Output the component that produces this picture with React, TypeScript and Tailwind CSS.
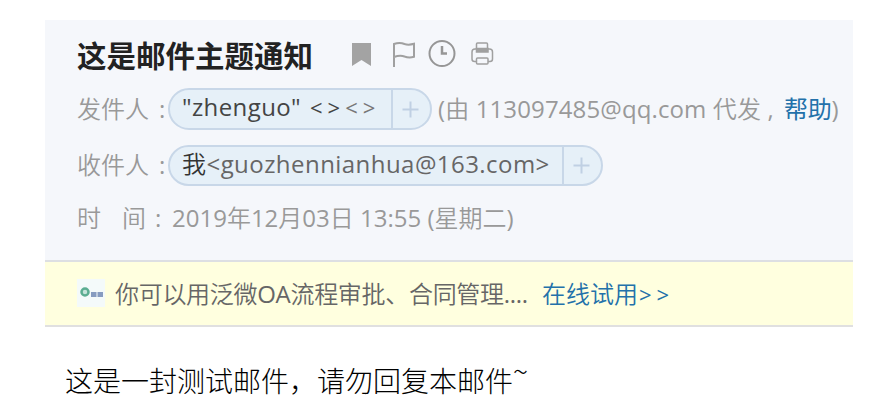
import React from "react";

function Bookmark() {
  return (
    <svg className="mb-[1px] ml-[40px] h-[32px] w-[20px]" viewBox="0 0 20 32" fill="#a3a3a3">
      <path d="M0 5h19v23l-9.500-6L0 28z" />
    </svg>
  );
}

function Flag() {
  return (
    <svg className="mb-[1px] ml-[20px] h-[32px] w-[25px]" viewBox="0 0 25 32" fill="none" stroke="#a0a0a0" strokeWidth="2">
      <path d="M2 29V6c4-1.500 7-1.500 10.500 0 3.500 1.200 6 .8 9.500-.2v13c-3.500 1-6 1-9.500-.3C9 17 6 17.500 2 19" />
    </svg>
  );
}

function Clock() {
  return (
    <svg className="mb-[1px] ml-[11px] h-[32px] w-[28px]" viewBox="0 0 28 32" fill="none" stroke="#969696" strokeWidth="2">
      <circle cx="14" cy="15.500" r="12.500" />
      <path d="M14 8v7.500h5" strokeWidth="2.500" />
    </svg>
  );
}

function Printer() {
  return (
    <svg className="mb-[1px] ml-[15px] h-[32px] w-[24px]" viewBox="0 0 24 32" fill="none" stroke="#a0a0a0" strokeWidth="1.500">
      <path d="M5.500 11V6q0-1 1-1h9q1 0 1 1v5M5.500 23.500H3.500Q1 23.500 1 21v-7Q1 11 4 11h14.500q3 0 3 3v7q0 2.500-2.500 2.500H17" />
      <path d="M5.500 10.500h11.500v3.500H5.500z" fill="#a0a0a0" />
      <rect x="5.500" y="20" width="11.500" height="6" rx="1" />
    </svg>
  );
}

function Plus({ className }: { className: string }) {
  return (
    <span className={"flex items-center justify-center border-l-2 border-[#c8d7e8] pr-[3px] " + className}>
      <svg className="h-[17px] w-[17px]" viewBox="0 0 17 17" stroke="#c0d0e3" strokeWidth="2">
        <path d="M8.500 0.500v16M0.500 8.500h16" />
      </svg>
    </span>
  );
}

export default function App() {
  return (
    <main className="h-[404px] w-[886px] overflow-hidden bg-white pt-[20px] pl-[45px] font-['Open_Sans','Noto_Sans_CJK_SC',sans-serif] text-[24px] whitespace-pre">
      <header className="h-[242px] w-[808px] border-b-2 border-[#dddfe3] bg-[#f5f7fb] pl-[32px] text-[#999]">
        <div className="flex h-[68px] items-center">
          <h1 className="w-[235px] font-['Noto_Sans_CJK_SC',sans-serif] text-[29.500px] leading-[36px] font-bold text-[#222]">这是邮件主题通知</h1>
          <Bookmark />
          <Flag />
          <Clock />
          <Printer />
        </div>
        <div className="flex h-[42px] items-center leading-[36px]">
          <span className="w-[82px] font-[350]">发件人</span>
          <span className="w-[9px]">:</span>
          <div className="flex h-[42px] w-[264px] shrink-0 rounded-full border-2 border-[#c8d7e8] bg-[#e6f0f8] pl-[12px] text-[#444]">
            <span className="w-[128px] leading-[34px] tracking-[0.400px]">"zhenguo"</span>
            <span className="w-[81px] text-[22px] leading-[34px] tracking-[5px]">&lt;&gt;<span className="text-[#777]">&lt;&gt;</span></span>
            <Plus className="w-[39px]" />
          </div>
          <span className="ml-[6px] w-[346px] shrink-0 tracking-[0.120px]">(<span className="font-[350]">由</span> 113097485@qq.com <span className="font-[350]">代发</span> ,</span>
          <span className="tracking-[-0.300px] text-[#2371aa]">帮助</span>
          <span>)</span>
        </div>
        <div className="mt-[14px] flex h-[42px] items-center leading-[36px]">
          <span className="w-[82px] font-[350]">收件人</span>
          <span className="w-[9px]">:</span>
          <div className="flex h-[41px] w-[435px] shrink-0 rounded-full border-2 border-[#c8d7e8] bg-[#e6f0f8] pl-[12px] text-[#666]">
            <span className="w-[380px] leading-[34px] tracking-[0.450px]"><span className="font-[350] text-[#333]">我</span>&lt;guozhennianhua@163.com&gt;</span>
            <Plus className="w-[39px]" />
          </div>
        </div>
        <div className="mt-[12px] flex h-[40px] items-center leading-[36px]">
          <span className="w-[45px] font-[350]">时</span>
          <span className="w-[33px] font-[350]">间</span>
          <span className="w-[17px]">:</span>
          <span>2019<span className="font-[350]">年</span>12<span className="font-[350]">月</span>03<span className="font-[350]">日</span> 13:55 (<span className="font-[350]">星期二</span>)</span>
        </div>
      </header>
      <div className="flex h-[65px] w-[808px] items-center border-b-2 border-[#e0e0e0] bg-[#ffffdf] pl-[32px] leading-[36px] text-[#666]">
        <svg className="mb-[1px] h-[28px] w-[28px]" viewBox="0 0 28 28">
          <path fill="#f4fafa" d="M0 0h28v28H0z" />
          <circle cx="8" cy="13" r="3.500" fill="#c5e3da" stroke="#5bad91" strokeWidth="2.500" />
          <path d="M14 15.500h5.500M20.500 15.500h5.500" stroke="#879cc0" strokeWidth="5" />
        </svg>
        <span className="ml-[10px] w-[427px] font-[350] tracking-[-0.300px]">你可以用泛微<span className="font-normal">OA</span>流程审批、合同管理<span className="font-normal">....</span></span>
        <span className="font-[350] text-[#2371aa]">在线试用<span className="ml-[1px] text-[22px] font-normal tracking-[5px]">&gt;&gt;</span></span>
      </div>
      <p className="pt-[33px] pl-[20px] font-['Noto_Sans_CJK_SC',sans-serif] text-[28px] leading-[40px] font-light text-black">这是一封测试邮件，请勿回复本邮件<span className="relative -top-[10px]">~</span></p>
    </main>
  );
}
